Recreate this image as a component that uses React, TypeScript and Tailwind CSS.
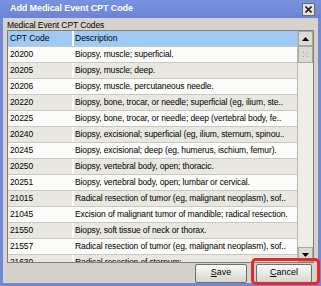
const rows: [string, string][] = [
  ['20200', 'Biopsy, muscle; superficial.'],
  ['20205', 'Biopsy, muscle; deep.'],
  ['20206', 'Biopsy, muscle, percutaneous needle.'],
  ['20220', 'Biopsy, bone, trocar, or needle; superficial (eg, ilium, ste..'],
  ['20225', 'Biopsy, bone, trocar, or needle; deep (vertebral body, fe..'],
  ['20240', 'Biopsy, excisional; superficial (eg, ilium, sternum, spinou..'],
  ['20245', 'Biopsy, excisional; deep (eg, humerus, ischium, femur).'],
  ['20250', 'Biopsy, vertebral body, open; thoracic.'],
  ['20251', 'Biopsy, vertebral body, open; lumbar or cervical.'],
  ['21015', 'Radical resection of tumor (eg, malignant neoplasm), sof..'],
  ['21045', 'Excision of malignant tumor of mandible; radical resection.'],
  ['21550', 'Biopsy, soft tissue of neck or thorax.'],
  ['21557', 'Radical resection of tumor (eg, malignant neoplasm), sof..'],
  ['21630', 'Radical resection of sternum;'],
];

function ScrollBar() {
  return (
    <div className="w-[16px] flex flex-col bg-[#eeede6] border-l border-[#b8b8b0]">
      <div className="h-[15px] flex items-center justify-center bg-[#dcdad2] border border-[#a8a8a0]">
        <svg width="7" height="4" viewBox="0 0 7 4">
          <path d="M0 4 L3.5 0 L7 4 Z" fill="#000" />
        </svg>
      </div>
      <div className="h-[17px] flex items-center justify-center bg-[#dcdad2] border border-[#a8a8a0]">
        <svg width="6" height="6" viewBox="0 0 6 6">
          <g fill="#9a9a92">
            <rect x="0" y="0" width="1" height="1" />
            <rect x="4" y="0" width="1" height="1" />
            <rect x="2" y="2" width="1" height="1" />
            <rect x="0" y="4" width="1" height="1" />
            <rect x="4" y="4" width="1" height="1" />
          </g>
        </svg>
      </div>
      <div className="flex-1" />
      <div className="h-[15px] flex items-center justify-center bg-[#dcdad2] border border-[#a8a8a0]">
        <svg width="7" height="4" viewBox="0 0 7 4">
          <path d="M0 0 L3.5 4 L7 0 Z" fill="#000" />
        </svg>
      </div>
    </div>
  );
}

function Button({ label }: { label: string }) {
  return (
    <button className="h-[19px] rounded-[2px] border border-[#6f6f6a] bg-gradient-to-b from-[#fafaf7] to-[#d6d5cd] text-[9px] text-black">
      <span className="underline">{label[0]}</span>
      {label.slice(1)}
    </button>
  );
}

export default function App() {
  return (
    <div
      className="relative w-[321px] h-[286px] flex flex-col bg-[#6f88d8] overflow-hidden"
      style={{ fontFamily: '"Liberation Sans", Arial, sans-serif' }}
    >
      <div className="h-[18px] flex items-center justify-between pl-[10px] pr-[6px] bg-gradient-to-b from-[#7a92de] to-[#6a84d4]">
        <span className="text-white font-bold text-[9px] tracking-[-0.1px]">Add Medical Event CPT Code</span>
        <div className="w-[13px] h-[13px] flex items-center justify-center bg-[#e4e2da] border border-[#6d6d68]">
          <svg width="7" height="7" viewBox="0 0 7 7">
            <path d="M0.5 0.5 L6.5 6.5 M6.5 0.5 L0.5 6.5" stroke="#222" strokeWidth="1.6" />
          </svg>
        </div>
      </div>

      <div className="flex-1 mx-[3px] mb-[3px] flex flex-col bg-[#d6d3cc] px-[4px]">
        <div className="h-[12px] pt-[2px] text-[8.5px] leading-[10px] tracking-[-0.1px] text-black">Medical Event CPT Codes</div>
        <div className="h-[233px] flex border border-[#7f7f7a] bg-white">
          <div className="flex-1 flex flex-col overflow-hidden">
            <div className="h-[16px] shrink-0 flex bg-[#9dcbf6] text-[8.5px] text-black border-b border-[#c8c8c0]">
              <div className="w-[66px] pl-[2px] flex items-center border-r-2 border-white">CPT Code</div>
              <div className="flex-1 pl-[1px] flex items-center">Description</div>
            </div>
            {rows.map(([code, desc], i) => (
              <div
                key={code}
                className={`h-[16px] shrink-0 flex text-[8.5px] tracking-[-0.12px] text-black border-b border-[#c9c9c2] ${
                  i % 2 === 0 ? 'bg-[#fbfbf9]' : 'bg-[#e8e8e1]'
                }`}
              >
                <div className="w-[66px] pl-[2px] flex items-center border-r-2 border-white">{code}</div>
                <div className="flex-1 pl-[1px] flex items-center whitespace-nowrap overflow-hidden">{desc}</div>
              </div>
            ))}
          </div>
          <ScrollBar />
        </div>
        <div className="flex-1 flex items-center justify-end gap-[9px] pr-[2px]">
          <div className="w-[52px] flex flex-col">
            <Button label="Save" />
          </div>
          <div className="w-[56px] flex flex-col">
            <Button label="Cancel" />
          </div>
        </div>
      </div>

      <div className="absolute left-[251px] top-[258px] w-[69px] h-[27px] rounded-[5px] border-[3px] border-[#e8262a]" />
    </div>
  );
}
